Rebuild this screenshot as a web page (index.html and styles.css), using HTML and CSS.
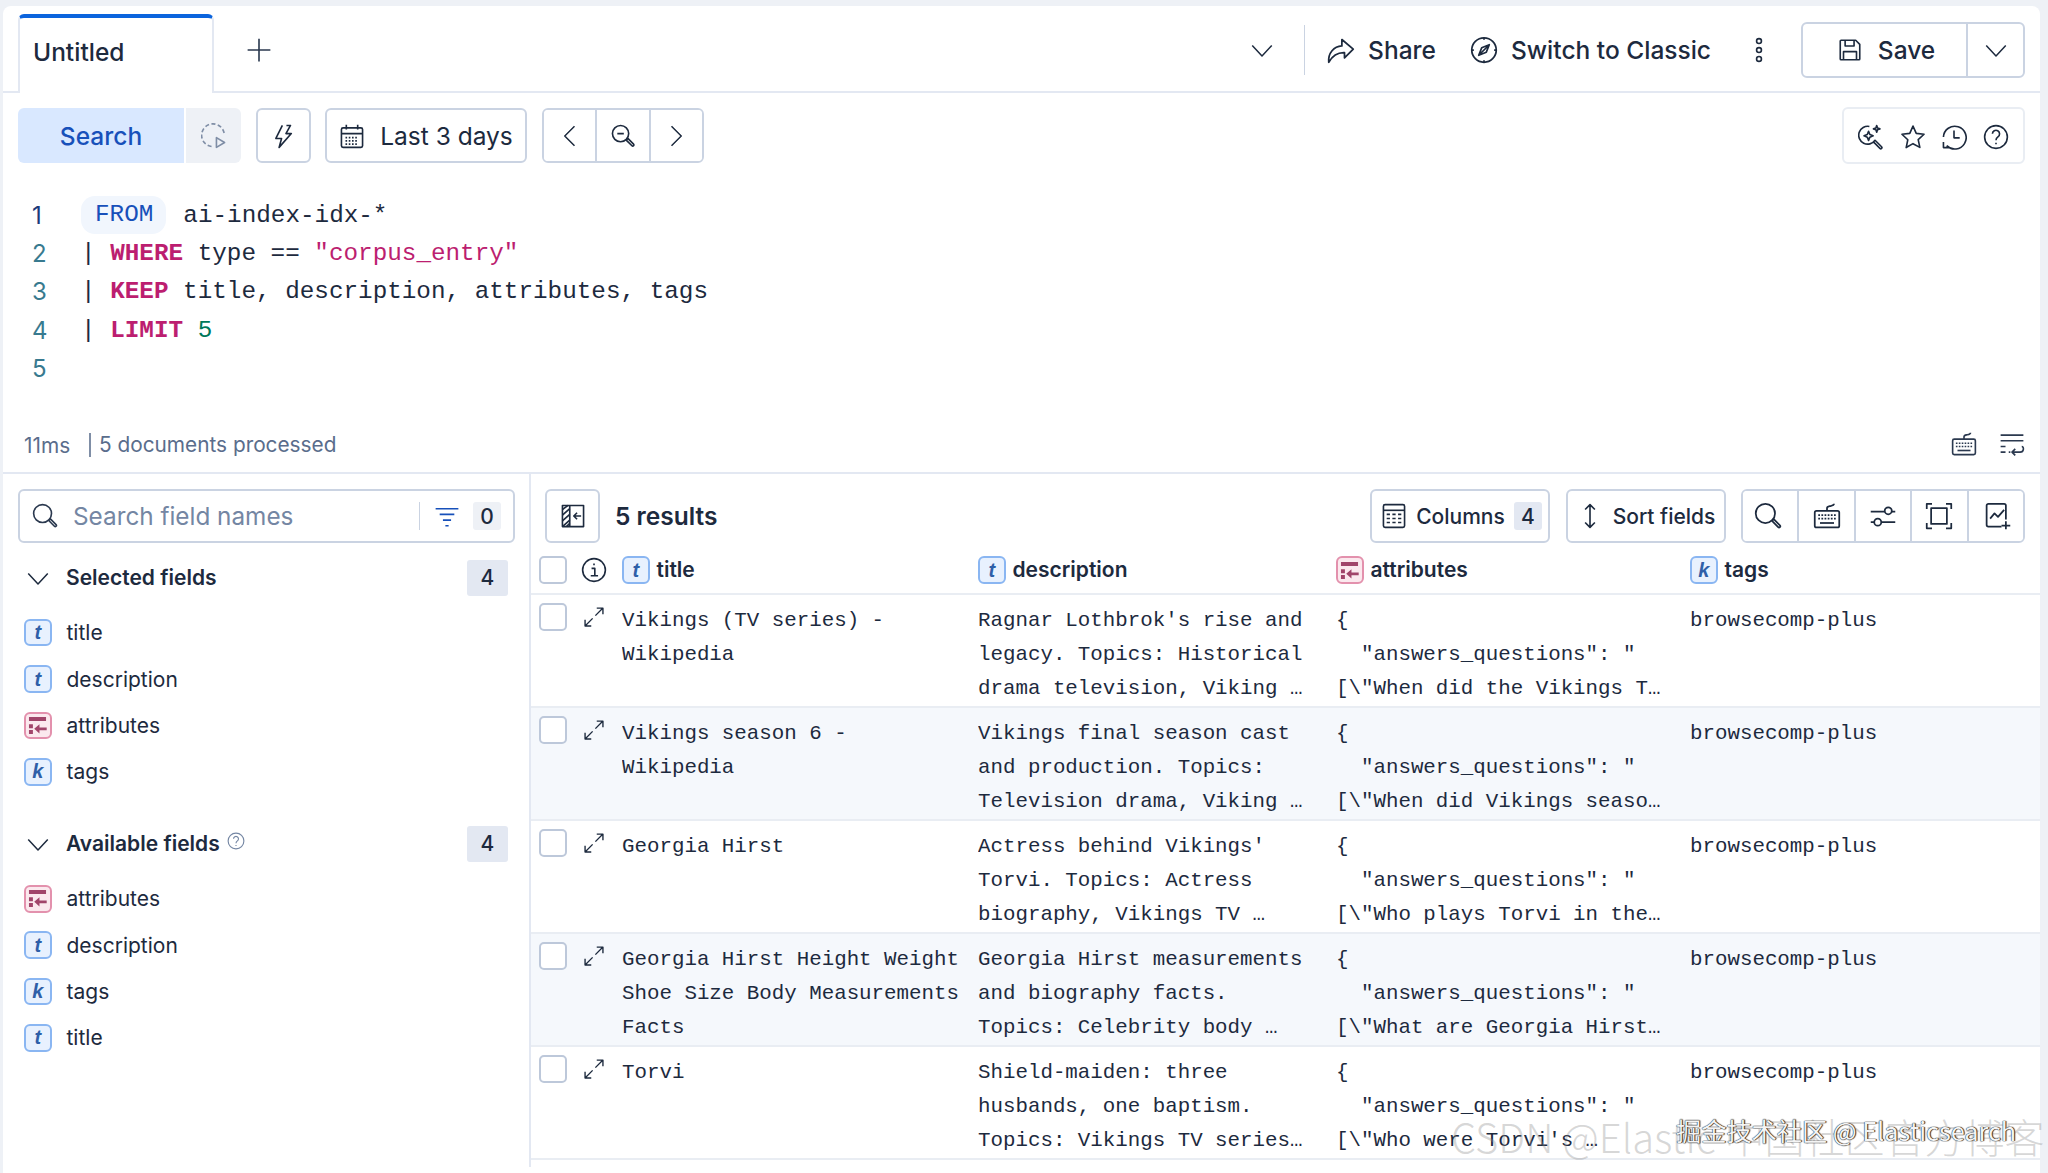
FILE: index.html
```html
<!DOCTYPE html>
<html lang="en">
<head>
<meta charset="utf-8">
<title>Discover</title>
<link rel="stylesheet" href="styles.css">
</head>
<body>
<svg class="defs" width="0" height="0" aria-hidden="true">
  <symbol id="i-chev-down" viewBox="0 0 16 16"><path d="M1.5 5l6.5 7 6.5-7"/></symbol>
  <symbol id="i-chev-left" viewBox="0 0 16 16"><path d="M11 1.5L4.5 8l6.5 6.5"/></symbol>
  <symbol id="i-chev-right" viewBox="0 0 16 16"><path d="M5 1.5L11.5 8 5 14.5"/></symbol>
  <symbol id="i-plus" viewBox="0 0 16 16"><path d="M8 1v14M1 8h14"/></symbol>
  <symbol id="i-share" viewBox="0 0 16 16"><path d="M1 15c-.5-5.500 3-9 7.500-9.300V2l6.500 5.500-5 5V9.500C5.500 9.300 3 11.500 1 15z"/></symbol>
  <symbol id="i-compass" viewBox="0 0 16 16"><circle cx="8" cy="8" r="7"/><path d="M11 5L9.300 9.300 5 11l1.700-4.300zM5 11l6-6"/><path d="M8 1v1.200M8 13.800V15M1 8h1.200M13.800 8H15"/></symbol>
  <symbol id="i-dots" viewBox="0 0 16 16"><circle cx="8" cy="2.500" r="1.500"/><circle cx="8" cy="8" r="1.500"/><circle cx="8" cy="13.500" r="1.500"/></symbol>
  <symbol id="i-save" viewBox="0 0 16 16"><path d="M2 2.500a.5.5 0 0 1 .5-.5h9l2.500 2.500v9a.5.5 0 0 1-.5.5h-11a.5.5 0 0 1-.5-.5z"/><path d="M5 2v3.500h5.500V2M4 14V9h8v5"/></symbol>
  <symbol id="i-refresh" viewBox="0 0 16 16"><path d="M6.500 14.500a7 7 0 1 1 7.800-8" stroke-dasharray="2.500 1.500"/><path d="M9.500 9l5 3-5 3z"/></symbol>
  <symbol id="i-bolt" viewBox="0 0 16 16"><path d="M7 1.500L3 9.500h3.500L5 15l7.500-8.500H9.200L12 1.500H9.500"/></symbol>
  <symbol id="i-cal" viewBox="0 0 16 16"><rect x="1.500" y="3" width="13" height="12" rx="1"/><path d="M1.500 6.500h13M4.500 1v3M11.500 1v3"/><path d="M4 9h8M4 11h8M4 13h8" stroke-dasharray="1 1"/></symbol>
  <symbol id="i-zoom-out" viewBox="0 0 16 16"><circle cx="6.500" cy="6.500" r="5"/><path d="M4.500 6.500h4M10 10.500l1-1 3.500 3.500a.7.7 0 0 1-1 1z"/></symbol>
  <symbol id="i-search" viewBox="0 0 16 16"><circle cx="6.500" cy="6.500" r="5.500"/><path d="M10.300 10.800l1-1 3.500 3.500a.7.7 0 0 1-1 1z"/></symbol>
  <symbol id="i-magic" viewBox="0 0 16 16"><path d="M7 1.500a5.500 5.500 0 1 0 3.500 8.500M9.500 11l1-1 4 4a.7.7 0 0 1-1 1z"/><path d="M6.500 4.500l.8 2 2 .8-2 .8-.8 2-.8-2-2-.8 2-.8zM11.500 1l.5 1.500 1.500.5-1.500.5-.5 1.500-.5-1.500L9.500 3l1.500-.5z"/></symbol>
  <symbol id="i-star" viewBox="0 0 16 16"><path d="M8 1.300l2 4.500 4.800.5-3.600 3.300 1 4.800L8 12.100 3.800 14.500l1-4.800L1.200 6.300 6 5.800z"/></symbol>
  <symbol id="i-history" viewBox="0 0 16 16"><path d="M3.500 13.300A7 7 0 1 0 1.500 8M8 4v4.500h3.500M1.500 11v3.500H5"/></symbol>
  <symbol id="i-help" viewBox="0 0 16 16"><circle cx="8" cy="8" r="7"/><path d="M5.800 6a2.200 2.200 0 1 1 3.400 1.900C8.400 8.500 8 9 8 10M8 11.500v1"/></symbol>
  <symbol id="i-kbd" viewBox="0 0 16 16"><rect x="1" y="5" width="14" height="9.500" rx="1"/><path d="M8 5V3.500c0-1 1-1 2-1.200s2-.5 2-1.300"/><path d="M3 7.500h10M3 9.500h10" stroke-dasharray="1 .8"/><path d="M4 12h8"/></symbol>
  <symbol id="i-wrap" viewBox="0 0 16 16"><path d="M1 2.500h14M1 6h14M1 9.500h3M1 13h3M6 13h1M14 9.500c1.500 0 1.500 3.500-1 3.500H8M10 11l-2 2 2 2"/></symbol>
  <symbol id="i-filter" viewBox="0 0 16 16"><path d="M1 3.500h14M3.500 7h9M5.500 10.500h5M7 14h2"/></symbol>
  <symbol id="i-collapse" viewBox="0 0 16 16"><rect x="1.500" y="1.500" width="13" height="13"/><path d="M6 1.500v13M13 8H8.500M10.500 6L8.500 8l2 2"/><path d="M1.500 4L5 1.500M1.500 7.500L6 3.500M1.500 11L6 7M1.500 14.500L6 10.500M4 14.500l2-2"/></symbol>
  <symbol id="i-table" viewBox="0 0 16 16"><rect x="1.500" y="1" width="13" height="14" rx="1"/><path d="M1.500 4.500h13"/><path d="M3.500 7h2M7 7h2M10.500 7h2M3.500 9.500h2M7 9.500h2M10.500 9.500h2M3.500 12h2M7 12h2M10.500 12h2"/></symbol>
  <symbol id="i-sort" viewBox="0 0 16 16"><path d="M8 1v14M5 4l3-3 3 3M5 12l3 3 3-3"/></symbol>
  <symbol id="i-sliders" viewBox="0 0 16 16"><path d="M1 5.500h8M13 5.500h2M1 11.500h2M7 11.500h8"/><circle cx="11" cy="5" r="2"/><circle cx="5" cy="11.500" r="2"/></symbol>
  <symbol id="i-full" viewBox="0 0 16 16"><rect x="3.500" y="3.500" width="9" height="9"/><path d="M1 4V1h3M12 1h3v3M15 12v3h-3M4 15H1v-3"/></symbol>
  <symbol id="i-chart" viewBox="0 0 16 16"><path d="M10 14H2.500a1 1 0 0 1-1-1V2a1 1 0 0 1 1-1h9a1 1 0 0 1 1 1v8"/><path d="M3.500 9.500L6 6.500l2 2 3.500-4M12.500 11v4.500M10 13.500h5"/></symbol>
  <symbol id="i-info" viewBox="0 0 16 16"><circle cx="8" cy="8" r="7"/><path d="M6.500 7h2v4.500M6 11.500h4.500M7.500 4.500h1"/></symbol>
  <symbol id="i-expand" viewBox="0 0 16 16"><path d="M9 7l5.500-5.500M10 1.500h4.500V6M7 9l-5.500 5.500M1.500 10v4.500H6"/></symbol>
  <symbol id="i-flat" viewBox="0 0 16 16"><path d="M1.500 1.500h13v3h-13zM1.500 7h3v3h-3zM1.500 11.500h3v3h-3zM15 9.500H9.500V7L5.500 10.500l4 3.500v-2.300H15z"/></symbol>
</svg>

<main class="card">
  <header class="tabbar">
    <div class="tab">Untitled</div>
    <svg class="ico ico-plus"><use href="#i-plus"/></svg>
    <svg class="ico ico-sm tab-chev"><use href="#i-chev-down"/></svg>
    <span class="vsep"></span>
    <a class="toplink link-share"><svg class="ico"><use href="#i-share"/></svg>Share</a>
    <a class="toplink link-classic"><svg class="ico"><use href="#i-compass"/></svg>Switch to Classic</a>
    <svg class="ico ico-dots"><use href="#i-dots"/></svg>
    <div class="save-group">
      <button class="save-main"><svg class="ico"><use href="#i-save"/></svg>Save</button>
      <button class="save-arrow"><svg class="ico ico-sm"><use href="#i-chev-down"/></svg></button>
    </div>
  </header>

  <section class="querybar">
    <button class="search-btn">Search</button>
    <button class="refresh-btn"><svg class="ico"><use href="#i-refresh"/></svg></button>
    <button class="btn square"><svg class="ico"><use href="#i-bolt"/></svg></button>
    <button class="btn date"><svg class="ico"><use href="#i-cal"/></svg>Last 3 days</button>
    <div class="btn-group nav">
      <button><svg class="ico ico-sm"><use href="#i-chev-left"/></svg></button>
      <button><svg class="ico"><use href="#i-zoom-out"/></svg></button>
      <button><svg class="ico ico-sm"><use href="#i-chev-right"/></svg></button>
    </div>
    <div class="help-group">
      <svg class="ico"><use href="#i-magic"/></svg>
      <svg class="ico"><use href="#i-star"/></svg>
      <svg class="ico"><use href="#i-history"/></svg>
      <svg class="ico"><use href="#i-help"/></svg>
    </div>
  </section>

  <section class="editor">
    <div class="cl"><span class="ln active">1</span><span class="from">FROM</span><span>ai-index-idx-*</span></div>
    <div class="cl"><span class="ln">2</span><span>| <b>WHERE</b> type == <i>"corpus_entry"</i></span></div>
    <div class="cl"><span class="ln">3</span><span>| <b>KEEP</b> title, description, attributes, tags</span></div>
    <div class="cl"><span class="ln">4</span><span>| <b>LIMIT</b> <em>5</em></span></div>
    <div class="cl"><span class="ln">5</span></div>
  </section>

  <section class="status">
    <span class="ms">11ms</span>
    <span class="docs">5 documents processed</span>
    <svg class="ico ico-status"><use href="#i-kbd"/></svg>
    <svg class="ico ico-status"><use href="#i-wrap"/></svg>
  </section>

  <section class="content">
    <aside class="sidebar">
      <div class="field-search">
        <svg class="ico search-ico"><use href="#i-search"/></svg>
        <span class="placeholder">Search field names</span>
        <span class="fsep"></span>
        <svg class="ico filter-ico"><use href="#i-filter"/></svg>
        <span class="count small">0</span>
      </div>
      <div class="group-head first">
        <svg class="ico ico-sm"><use href="#i-chev-down"/></svg>
        <span class="group-title">Selected fields</span>
        <span class="count">4</span>
      </div>
      <ul class="fields">
        <li><span class="ft">t</span>title</li>
        <li><span class="ft">t</span>description</li>
        <li><span class="ft flat"><svg><use href="#i-flat"/></svg></span>attributes</li>
        <li><span class="ft">k</span>tags</li>
      </ul>
      <div class="group-head second">
        <svg class="ico ico-sm"><use href="#i-chev-down"/></svg>
        <span class="group-title">Available fields</span>
        <svg class="ico ico-tip"><use href="#i-help"/></svg>
        <span class="count">4</span>
      </div>
      <ul class="fields">
        <li><span class="ft flat"><svg><use href="#i-flat"/></svg></span>attributes</li>
        <li><span class="ft">t</span>description</li>
        <li><span class="ft">k</span>tags</li>
        <li><span class="ft">t</span>title</li>
      </ul>
    </aside>

    <div class="results">
      <div class="res-toolbar">
        <button class="btn square"><svg class="ico"><use href="#i-collapse"/></svg></button>
        <span class="res-count">5 results</span>
        <button class="btn tool cols"><svg class="ico"><use href="#i-table"/></svg>Columns<span class="count small">4</span></button>
        <button class="btn tool sort"><svg class="ico"><use href="#i-sort"/></svg>Sort fields</button>
        <div class="btn-group tools">
          <button><svg class="ico"><use href="#i-search"/></svg></button>
          <button><svg class="ico"><use href="#i-kbd"/></svg></button>
          <button><svg class="ico"><use href="#i-sliders"/></svg></button>
          <button><svg class="ico"><use href="#i-full"/></svg></button>
          <button><svg class="ico"><use href="#i-chart"/></svg></button>
        </div>
      </div>

      <div class="grid-row head">
        <div class="ctl"><span class="cb"></span><svg class="ico ico-info"><use href="#i-info"/></svg></div>
        <div class="hc"><span class="ft">t</span>title</div>
        <div class="hc"><span class="ft">t</span>description</div>
        <div class="hc"><span class="ft flat"><svg><use href="#i-flat"/></svg></span>attributes</div>
        <div class="hc"><span class="ft">k</span>tags</div>
      </div>

      <div class="grid-row">
        <div class="ctl"><span class="cb"></span><svg class="ico ico-exp"><use href="#i-expand"/></svg></div>
        <div class="cell">Vikings (TV series) -
Wikipedia</div>
        <div class="cell">Ragnar Lothbrok's rise and
legacy. Topics: Historical
drama television, Viking …</div>
        <div class="cell">{
  "answers_questions": "
[\"When did the Vikings T…</div>
        <div class="cell">browsecomp-plus</div>
      </div>
      <div class="grid-row alt">
        <div class="ctl"><span class="cb"></span><svg class="ico ico-exp"><use href="#i-expand"/></svg></div>
        <div class="cell">Vikings season 6 -
Wikipedia</div>
        <div class="cell">Vikings final season cast
and production. Topics:
Television drama, Viking …</div>
        <div class="cell">{
  "answers_questions": "
[\"When did Vikings seaso…</div>
        <div class="cell">browsecomp-plus</div>
      </div>
      <div class="grid-row">
        <div class="ctl"><span class="cb"></span><svg class="ico ico-exp"><use href="#i-expand"/></svg></div>
        <div class="cell">Georgia Hirst</div>
        <div class="cell">Actress behind Vikings'
Torvi. Topics: Actress
biography, Vikings TV …</div>
        <div class="cell">{
  "answers_questions": "
[\"Who plays Torvi in the…</div>
        <div class="cell">browsecomp-plus</div>
      </div>
      <div class="grid-row alt">
        <div class="ctl"><span class="cb"></span><svg class="ico ico-exp"><use href="#i-expand"/></svg></div>
        <div class="cell">Georgia Hirst Height Weight
Shoe Size Body Measurements
Facts</div>
        <div class="cell">Georgia Hirst measurements
and biography facts.
Topics: Celebrity body …</div>
        <div class="cell">{
  "answers_questions": "
[\"What are Georgia Hirst…</div>
        <div class="cell">browsecomp-plus</div>
      </div>
      <div class="grid-row">
        <div class="ctl"><span class="cb"></span><svg class="ico ico-exp"><use href="#i-expand"/></svg></div>
        <div class="cell">Torvi</div>
        <div class="cell">Shield-maiden: three
husbands, one baptism.
Topics: Vikings TV series…</div>
        <div class="cell">{
  "answers_questions": "
[\"Who were Torvi's …</div>
        <div class="cell">browsecomp-plus</div>
      </div>
    </div>
  </section>
</main>
<div class="wm wm-csdn">CSDN @Elastic 中国社区官方博客</div>
<div class="wm wm-juejin">掘金技术社区 @ Elasticsearch</div>
</body>
</html>
```
FILE: styles.css
```css
* { box-sizing: border-box; }
html, body { margin: 0; height: 100%; }
body {
  position: relative;
  height: 1173px;
  overflow: hidden;
  background: #eef1f6;
  font-family: Inter, "Noto Sans", sans-serif;
  color: #1d2a3e;
}
ul { list-style: none; margin: 0; padding: 0; }
button { font: inherit; color: inherit; background: #fff; padding: 0; margin: 0; }
.defs { position: absolute; }

.ico {
  width: 26px; height: 26px; flex: none;
  fill: none; stroke: currentColor; stroke-width: 1;
  stroke-linejoin: round; overflow: visible;
}
.ico-sm { width: 24px; height: 24px; }

.card {
  margin: 6px 8px 0 3px;
  height: 1167px;
  background: #fff;
  border-radius: 8px 8px 0 0;
  overflow: hidden;
}

/* tab bar */
.tabbar {
  display: flex; align-items: center;
  height: 87px;
  border-bottom: 2px solid #e3e8f2;
  padding-left: 15px;
}
.tab {
  align-self: flex-end;
  width: 196px; height: 79px;
  margin-bottom: -2px;
  background: #fff;
  border: 2px solid #e3e8f2;
  border-top: 4px solid #0b64dd;
  border-bottom: 0;
  border-radius: 6px 6px 0 0;
  padding: 17px 0 0 13px;
  font-size: 24.5px;
  font-weight: 500;
  line-height: 34px;
}
.ico-plus { margin-left: 32px; margin-top: 2px; color: #2b394f; }
.tab-chev { margin-left: auto; margin-top: 2px; }
.vsep { width: 1px; height: 50px; background: #cad3e2; margin: 2px 0 0 30px; }
.toplink {
  display: flex; align-items: center;
  font-size: 24.5px; font-weight: 500; margin-top: 2px;
}
.toplink .ico { width: 28px; height: 28px; }
.link-share { margin-left: 22px; gap: 13px; }
.link-classic { margin-left: 34px; gap: 13px; }
.ico-dots { margin: 2px 0 0 35px; }
.save-group {
  display: flex; height: 56px;
  margin: 2px 15px 0 29px;
  border: 2px solid #cad3e2; border-radius: 6px;
  font-size: 24.5px; font-weight: 500;
}
.save-main {
  display: flex; align-items: center; justify-content: center; gap: 15px;
  width: 165px; padding-left: 3px; border: 0; border-right: 2px solid #cad3e2; border-radius: 6px 0 0 6px;
}
.save-arrow { width: 55px; border: 0; border-radius: 0 6px 6px 0; display: flex; align-items: center; justify-content: center; }

/* query bar */
.querybar {
  display: flex; align-items: center;
  height: 55px; margin-top: 15px;
  padding-left: 15px;
}
.search-btn {
  width: 166px; height: 55px; border: 0;
  background: #d9e8ff; color: #1750ba;
  border-radius: 6px 0 0 6px;
  font-size: 24.5px; font-weight: 500;
}
.refresh-btn {
  width: 55px; height: 55px; border: 0; margin-left: 2px;
  background: #eef1f6; color: #7f8ea6;
  border-radius: 0 6px 6px 0;
  display: flex; align-items: center; justify-content: center;
}
.btn {
  height: 55px;
  border: 2px solid #cad3e2; border-radius: 6px;
  display: flex; align-items: center; justify-content: center;
}
.square { width: 55px; margin-left: 15px; }
.date { width: 202px; margin-left: 14px; gap: 15px; font-size: 24.5px; }
.btn-group {
  display: flex; height: 55px;
  border: 2px solid #cad3e2; border-radius: 6px; overflow: hidden;
}
.btn-group button {
  border: 0; border-right: 2px solid #cad3e2;
  display: flex; align-items: center; justify-content: center;
}
.btn-group button:last-child { border-right: 0; }
.nav { margin-left: 15px; width: 162px; }
.nav button { flex: 1; }
.help-group {
  margin-left: auto; margin-right: 15px;
  display: flex; align-items: center; gap: 15.6px;
  width: 183px; height: 57px; padding: 2px 14px 0;
  border: 2px solid #e9edf3; border-radius: 6px;
}

/* editor */
.editor {
  height: 249px;
  padding-top: 33px;
  font-family: "Liberation Mono", "DejaVu Sans Mono", monospace;
  font-size: 24.3px;
  color: #1d2a3e;
}
.cl { display: flex; align-items: center; height: 38.3px; white-space: pre; }
.ln { width: 78px; padding-left: 29px; font-family: Inter, sans-serif; font-size: 24px; color: #387a8f; }
.ln.active { color: #1c3a7a; }
.from {
  color: #1750ba; background: #f1f6fd;
  height: 38px; line-height: 38px;
  padding: 0 13px 0 14px; border-radius: 14px; margin-right: 17px;
}
.cl b { color: #bc1e70; font-weight: 700; }
.cl i { color: #bc1e70; font-style: normal; }
.cl em { color: #00785a; font-style: normal; }

/* status */
.status {
  display: flex; align-items: center;
  height: 62px; padding: 6px 15px 0 21px;
  border-bottom: 2px solid #e3e8f2;
  font-size: 20.8px; color: #5a6d8c;
}
.ms { width: 65px; }
.docs { border-left: 2px solid #7f8ea6; padding-left: 8px; line-height: 24px; }
.ico-status { margin: -2px 0 0 22px; color: #2b394f; }
.docs + .ico-status { margin-left: auto; }

/* content */
.content { display: flex; height: 693px; }
.sidebar {
  width: 528px; flex: none;
  border-right: 2px solid #e3e8f2;
  padding: 15px 15px 0 15px;
}
.field-search {
  display: flex; align-items: center;
  height: 54px; width: 497px;
  border: 2px solid #cad3e2; border-radius: 6px;
  padding: 0 12px 0 12px;
}
.search-ico { color: #2b394f; }
.placeholder { font-size: 24.3px; color: #7486a3; margin-left: 15px; }
.fsep { width: 1px; height: 28px; background: #cad3e2; margin-left: auto; }
.filter-ico { color: #1750ba; margin-left: 14px; }
.count {
  display: flex; align-items: center; justify-content: center;
  width: 41px; height: 36px;
  background: #e3e8f2; border-radius: 3px;
  font-size: 21px; font-weight: 500;
  margin-left: auto;
}
.count.small { width: 28px; height: 28px; background: #eef1f6; margin-left: 13px; }
.group-head {
  display: flex; align-items: center;
  height: 36px; padding: 0 6px 0 8px;
}
.group-head.first { margin-top: 16.5px; }
.group-head.second { margin-top: 30.5px; }
.group-title { font-size: 21px; font-weight: 600; margin-left: 16px; }
.ico-tip { width: 18px; height: 18px; margin: -6px 0 0 7px; color: #7486a3; }
.fields { margin-top: 14px; padding-left: 6px; }
.fields li {
  display: flex; align-items: center; gap: 15px;
  height: 46.4px; font-size: 21px;
}
.ft {
  width: 27.5px; height: 27.5px; flex: none;
  display: inline-flex; align-items: center; justify-content: center;
  background: #e8f1fe; border: 2px solid #8ab6f2; border-radius: 6px;
  font-family: "Liberation Sans", sans-serif;
  font-style: italic; font-weight: 700; font-size: 20px; color: #2f5fa8;
}
.ft.flat { background: #fbe9ee; border-color: #e391ad; }
.ft.flat svg { width: 21px; height: 21px; fill: #a1456a; stroke: none; }

/* results */
.results { flex: 1; min-width: 0; }
.res-toolbar {
  display: flex; align-items: center;
  height: 54px; margin-top: 15px;
  padding-right: 15px;
}
.res-toolbar .square { margin-left: 14px; height: 54px; }
.res-count { font-size: 24.5px; font-weight: 600; margin-left: 15px; }
.tool { height: 54px; font-size: 21px; font-weight: 500; gap: 10px; }
.cols { width: 180px; margin-left: auto; padding-left: 3px; gap: 9px; }
.sort { width: 160px; margin-left: 16px; }
.tool .count.small { margin-left: 0; background: #e3e8f2; }
.tools { width: 284px; height: 54px; margin-left: 15px; }
.tools button { flex: 1; }
.tools .ico { width: 28px; height: 28px; }
.tools button:first-child .ico { margin-right: 4px; }
.tools button:last-child .ico { margin-left: 4px; }

.grid-row {
  display: grid;
  grid-template-columns: 91px 356px 358px 354px 1fr;
  height: 113px;
  border-bottom: 2px solid #e9edf3;
  font-family: "Liberation Mono", "DejaVu Sans Mono", monospace;
  font-size: 20.8px;
  line-height: 34.3px;
}
.grid-row.alt { background: #f5f8fc; }
.grid-row.head {
  height: 52px; padding-top: 4px; align-items: center;
  font-family: Inter, sans-serif; font-weight: 600; font-size: 21px; line-height: 28px;
}
.ctl { display: flex; padding: 8px 0 0 8px; gap: 15px; align-items: flex-start; }
.head .ctl { padding-top: 0; align-items: center; }
.cb {
  width: 28px; height: 28px; flex: none; display: block;
  border: 2px solid #bdc8da; border-radius: 5px; background: #fff;
}
.ico-info { width: 26px; height: 26px; margin-left: -1px; }
.ico-exp { width: 22px; height: 22px; margin-top: 3px; margin-left: 1px; }
.hc { display: flex; align-items: center; gap: 7px; }
.cell { white-space: pre; padding-top: 8.500px; overflow: hidden; }

/* watermarks */
.wm {
  position: absolute; white-space: nowrap;
  font-family: "Noto Sans CJK SC", sans-serif;
}
.wm-csdn { left: 1451px; top: 1111px; font-size: 40px; line-height: 50px; color: rgba(140,140,140,.35); font-weight: 300; }
.wm-juejin {
  left: 1676px; top: 1115px; font-size: 25.2px; line-height: 30px;
  color: #f4f4f4; text-shadow: 0 0 1px #222, 0 0 1px #222, 1px 0 1px #333;
}
```
